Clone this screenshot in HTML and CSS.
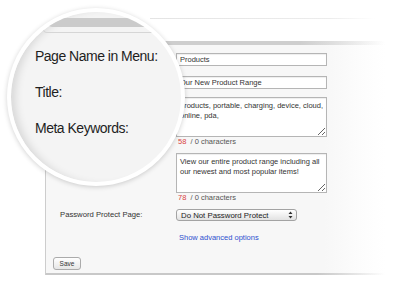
FILE: index.html
```html
<!DOCTYPE html>
<html lang="en">
<head>
  <meta charset="UTF-8" />
  <meta name="viewport" content="width=device-width, initial-scale=1.0"/>
  <title>Page Settings</title>
  <link rel="stylesheet" href="styles.css">
</head>
<body>
  <div class="page">
    <div class="window-edge"></div>

    <div class="panel">
      <div class="panel-top"></div>

      <form class="form">
        <!-- the labels of the first rows sit under the magnifier -->
        <div class="row row-name">
          <span class="row-label"></span>
          <input class="text-input" type="text" value="Products" readonly />
        </div>
        <div class="row row-title">
          <span class="row-label"></span>
          <input class="text-input" type="text" value="Our New Product Range" readonly />
        </div>
        <div class="row row-keywords">
          <span class="row-label"></span>
          <div class="field">
            <textarea class="textarea" wrap="off" readonly>products, portable, charging, device, cloud,
online, pda,</textarea>
            <div class="counter"><span class="used">58</span>&nbsp; / 0 characters</div>
          </div>
        </div>
        <div class="row row-desc">
          <span class="row-label"></span>
          <div class="field">
            <textarea class="textarea" wrap="off" readonly>View our entire product range including all
our newest and most popular items!</textarea>
            <div class="counter"><span class="used">78</span>&nbsp; / 0 characters</div>
          </div>
        </div>
        <div class="row row-password">
          <label class="row-label">Password Protect Page:</label>
          <div class="select">
            <span>Do Not Password Protect</span>
            <svg width="5" height="8" viewBox="0 0 5 8"><path d="M2.5 0.5 L4.5 3 L0.5 3 Z M2.5 7.5 L4.5 5 L0.5 5 Z" fill="#333"/></svg>
          </div>
        </div>
        <div class="row">
          <span class="row-label"></span>
          <a class="link" href="#">Show advanced options</a>
        </div>
      </form>

      <div class="footer">
        <button class="save" type="button">Save</button>
      </div>

      <div class="panel-bottom"></div>
    </div>

    <div class="magnifier">
      <div class="mag-bar"></div>
      <div class="mag-frame"></div>
      <div class="mag-label">Page Name in Menu:</div>
      <div class="mag-label">Title:</div>
      <div class="mag-label">Meta Keywords:</div>
    </div>
  </div>
</body>
</html>
```

FILE: styles.css
```css
* {
  box-sizing: border-box;
}

body {
  margin: 0;
  background-color: #fff;
  font-family: "Liberation Sans", Arial, sans-serif;
  color: #333;
}

.page {
  position: relative;
  width: 393px;
  height: 281px;
  overflow: hidden;
}

.window-edge {
  margin: 18px 0 0 150px;
  width: 225px;
  height: 1px;
  background: linear-gradient(to right, #e4e4e4, #ececec 80%, rgba(236, 236, 236, 0));
}

/* the small settings screen */
.panel {
  display: flex;
  flex-direction: column;
  margin: 22px 0 0 45px;
  width: 340px;
  height: 234px;
  border-left: 1px solid #cdcdcd;
  background: linear-gradient(to right, #f7f7f7 82%, #fcfcfc 92%, #fff);
}

.panel-top {
  height: 4px;
  background: linear-gradient(to right, #cecece 75%, rgba(206, 206, 206, 0));
}

.form {
  padding: 8px 0 0 14px;
}

.row {
  display: flex;
  align-items: flex-start;
}

.row-name {
  margin-bottom: 10px;
}

.row-title {
  margin-bottom: 8px;
}

.row-keywords,
.row-desc {
  margin-bottom: 6px;
}

.row-password {
  margin-bottom: 12px;
}

.row-label {
  flex: none;
  width: 116px;
  font-size: 7.7px;
  line-height: 12px;
  color: #333;
}

.field {
  width: 151px;
}

.text-input {
  display: block;
  width: 151px;
  height: 13px;
  padding: 0 3px;
  border: 1px solid #b5b5b5;
  background-color: #fff;
  font: 7.5px/11px "Liberation Sans", Arial, sans-serif;
  color: #333;
  box-shadow: inset 0 1px 1px rgba(0, 0, 0, 0.07);
  outline: none;
}

.textarea {
  display: block;
  width: 151px;
  height: 40px;
  padding: 3px;
  margin: 0;
  border: 1px solid #b5b5b5;
  background-color: #fff;
  font: 7.5px/10px "Liberation Sans", Arial, sans-serif;
  color: #333;
  overflow: hidden;
  resize: both;
  outline: none;
  box-shadow: inset 0 1px 1px rgba(0, 0, 0, 0.07);
}

.counter {
  padding-left: 2px;
  font-size: 7.5px;
  line-height: 10px;
  color: #555;
}

.counter .used {
  color: #d94343;
}

.select {
  display: flex;
  align-items: center;
  justify-content: space-between;
  width: 121px;
  height: 12px;
  padding: 0 3px 0 4px;
  border: 1px solid #a3a3a3;
  border-radius: 3px;
  background: linear-gradient(#fff, #e2e2e2);
  font-size: 7.8px;
  color: #222;
}

.link {
  font-size: 7.5px;
  line-height: 10px;
  padding-left: 3px;
  color: #2c4fcf;
  text-decoration: none;
}

.footer {
  padding: 9px 0 0 7px;
}

.save {
  width: 28px;
  height: 13px;
  padding: 0;
  border: 1px solid #ababab;
  border-radius: 3px;
  background: linear-gradient(#fff, #e6e6e6);
  font: 6.5px "Liberation Sans", Arial, sans-serif;
  color: #333;
}

.panel-bottom {
  margin-top: auto;
  height: 2px;
  background: linear-gradient(to right, #c8c8c8 80%, rgba(200, 200, 200, 0));
}

/* magnifying glass over the top left corner */
.magnifier {
  position: absolute;
  left: 7px;
  top: 8px;
  width: 178px;
  height: 178px;
  border: 4px solid #fff;
  border-radius: 50%;
  background-color: #f4f4f4;
  overflow: hidden;
  box-shadow: 0 1px 5px rgba(0, 0, 0, 0.18), inset 8px 0 8px -4px rgba(0, 0, 0, 0.12);
}

.mag-bar {
  margin: 6px 0 0 37px;
  height: 9px;
  border-radius: 5px 0 0 5px;
  background-color: #cbcbcb;
}

.mag-frame {
  margin: -5px 0 0 32px;
  height: 11px;
  border-left: 1px solid #d6d6d6;
  border-bottom: 1px solid #d6d6d6;
  border-bottom-left-radius: 4px;
}

.mag-label {
  margin: 20px 0 0 24px;
  font-size: 14px;
  line-height: 16px;
  letter-spacing: -0.5px;
  color: #1e1e1e;
}

.mag-frame + .mag-label {
  margin-top: 15px;
}
```
